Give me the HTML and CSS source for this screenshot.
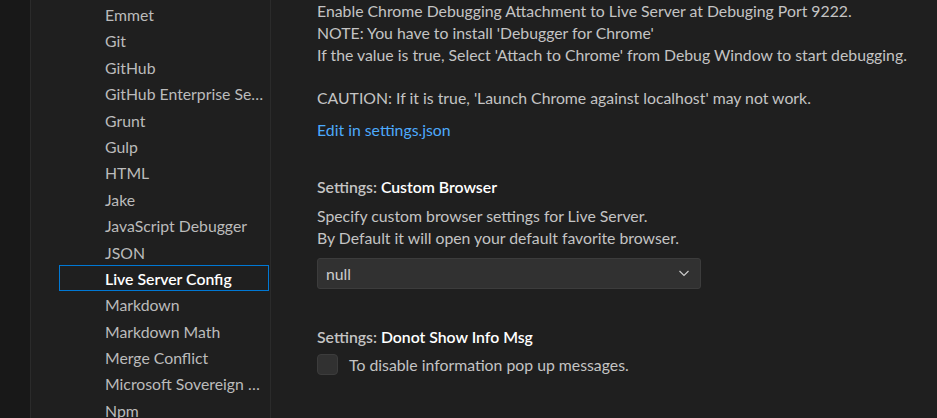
FILE: index.html
```html
<!DOCTYPE html>
<html lang="en">
<head>
    <meta charset="UTF-8">
    <title>Settings - Live Server Config</title>
    <link rel="stylesheet" href="styles.css">
</head>
<body>
    <div class="workbench">
        <div class="activity"></div>

        <nav class="toc">
            <div class="toc-item">Emmet</div>
            <div class="toc-item">Git</div>
            <div class="toc-item">GitHub</div>
            <div class="toc-item">GitHub Enterprise Server Authentication</div>
            <div class="toc-item">Grunt</div>
            <div class="toc-item">Gulp</div>
            <div class="toc-item">HTML</div>
            <div class="toc-item">Jake</div>
            <div class="toc-item">JavaScript Debugger</div>
            <div class="toc-item">JSON</div>
            <div class="toc-item selected">Live Server Config</div>
            <div class="toc-item">Markdown</div>
            <div class="toc-item">Markdown Math</div>
            <div class="toc-item">Merge Conflict</div>
            <div class="toc-item">Microsoft Sovereign Cloud</div>
            <div class="toc-item">Npm</div>
        </nav>

        <main class="settings">
            <div class="setting">
                <div class="desc">
                    <p>Enable Chrome Debugging Attachment to Live Server at Debuging Port 9222.</p>
                    <p>NOTE: You have to install 'Debugger for Chrome'</p>
                    <p>If the value is true, Select 'Attach to Chrome' from Debug Window to start debugging.</p>
                    <p class="blank"></p>
                    <p>CAUTION: If it is true, 'Launch Chrome against localhost' may not work.</p>
                </div>
                <a class="edit-link" href="#">Edit in settings.json</a>
            </div>

            <div class="setting setting-enum">
                <div class="title"><span class="category">Settings: </span><span class="label">Custom Browser</span></div>
                <div class="desc">
                    <p>Specify custom browser settings for Live Server.</p>
                    <p>By Default it will open your default favorite browser.</p>
                </div>
                <div class="select">
                    <span>null</span>
                    <svg class="chevron" width="16" height="16" viewBox="0 0 16 16">
                        <path d="M3.5 6l4.5 4.5L12.5 6" fill="none" stroke="#cccccc" stroke-width="1.2"/>
                    </svg>
                </div>
            </div>

            <div class="setting">
                <div class="title"><span class="category">Settings: </span><span class="label">Donot Show Info Msg</span></div>
                <label class="check">
                    <span class="box"></span>
                    <span>To disable information pop up messages.</span>
                </label>
            </div>
        </main>
    </div>
</body>
</html>
```

FILE: styles.css
```css
html, body {
    margin: 0;
    height: 100%;
    overflow: hidden;
}

body {
    font-family: "Segoe UI", Lato, sans-serif;
    font-size: 15.8px;
    background-color: #1f1f1f;
    color: #cccccc;
}

.workbench {
    display: flex;
    height: 418px;
}

.activity {
    width: 30px;
    flex-shrink: 0;
    background-color: #181818;
    border-right: 1px solid #2b2b2b;
}

.toc {
    width: 240px;
    flex-shrink: 0;
    padding: 1px 1px 0 28px;
    box-sizing: border-box;
    border-right: 1px solid #2b2b2b;
    overflow: hidden;
}

.toc-item {
    height: 26.4px;
    line-height: 25.4px;
    padding: 0 1px 0 45px;
    border: 1px solid transparent;
    box-sizing: border-box;
    color: #bbbbbb;
    white-space: nowrap;
    overflow: hidden;
    text-overflow: ellipsis;
}

.toc-item.selected {
    border-color: #0078d4;
    color: #ffffff;
    font-weight: 600;
}

.settings {
    flex: 1;
    padding-left: 46px;
}

.setting {
    margin-bottom: 35px;
}

.setting-enum {
    margin-bottom: 37px;
}

.desc p {
    margin: 0;
    line-height: 21.8px;
    color: #c4c4c4;
}

.desc p.blank {
    height: 21.8px;
}

.edit-link {
    display: inline-block;
    margin-top: 10px;
    line-height: 22px;
    color: #4daafc;
    text-decoration: none;
}

.title {
    line-height: 22px;
    font-weight: 600;
    margin-bottom: 7px;
}

.category {
    color: #c4c4c4;
}

.label {
    color: #ffffff;
}

.select {
    width: 384px;
    height: 31px;
    margin-top: 9px;
    box-sizing: border-box;
    display: flex;
    align-items: center;
    justify-content: space-between;
    padding: 0 8px;
    background-color: #313131;
    border: 1px solid #3c3c3c;
    border-radius: 3px;
    color: #cccccc;
}

.check {
    display: flex;
    align-items: center;
    gap: 11px;
    margin-top: -1px;
    color: #c4c4c4;
}

.box {
    width: 21px;
    height: 21px;
    box-sizing: border-box;
    background-color: #313131;
    border: 1px solid #3c3c3c;
    border-radius: 4px;
}
```
